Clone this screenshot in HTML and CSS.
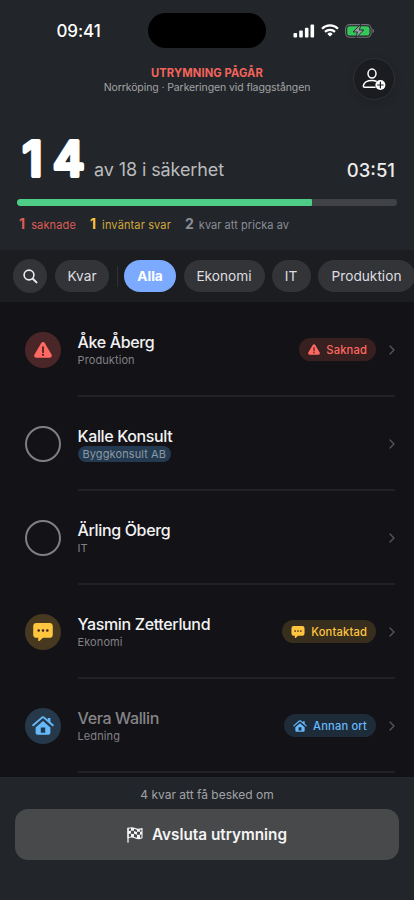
FILE: index.html
```html
<!DOCTYPE html>
<html lang="sv">
<head>
<meta charset="utf-8">
<title>Utrymning</title>
<link rel="stylesheet" href="styles.css">
</head>
<body>
<svg class="defs" width="0" height="0" aria-hidden="true">
  <symbol id="warn" viewBox="0 0 18 16"><path fill="currentColor" d="M7.1 1.2a2.2 2.2 0 0 1 3.8 0l6.6 11.3a2.2 2.2 0 0 1-1.9 3.3H2.4a2.2 2.2 0 0 1-1.9-3.3z"/><path class="cut" d="M9 5.2v5" stroke-width="1.7" stroke-linecap="round"/><circle class="dot" cx="9" cy="12.8" r="1.1"/></symbol>
  <symbol id="chat" viewBox="0 0 20 18"><path fill="currentColor" d="M3.6 0h12.8A3.4 3.4 0 0 1 19.8 3.4v8a3.4 3.4 0 0 1-3.4 3.4H10l-3.6 3.1c-.6.5-1.2.2-1.2-.5v-2.6H3.6A3.4 3.4 0 0 1 .2 11.4v-8A3.4 3.4 0 0 1 3.6 0z"/><circle class="dot" cx="5.7" cy="7.5" r="1.3"/><circle class="dot" cx="10" cy="7.5" r="1.3"/><circle class="dot" cx="14.3" cy="7.5" r="1.3"/></symbol>
  <symbol id="home" viewBox="0 0 22 19"><path d="M1.2 9.3 10 1.6q1-.8 2 0l8.8 7.7" fill="none" stroke="currentColor" stroke-width="1.9" stroke-linecap="round" stroke-linejoin="round"/><path fill="currentColor" d="M15.8 1.9h2.6v5.3l-2.6-2.3z"/><path fill="currentColor" fill-rule="evenodd" d="M3.6 11.4 11 5l7.4 6.4v5.4a2 2 0 0 1-2 2H5.6a2 2 0 0 1-2-2zM8.8 11.6v5.2h4.4v-5.2z"/></symbol>
  <symbol id="chev" viewBox="0 0 6 10"><path d="M1 1l4 4-4 4" fill="none" stroke="currentColor" stroke-width="1.2" stroke-linecap="round" stroke-linejoin="round"/></symbol>
</svg>
<div class="screen">
  <header class="top">
    <div class="status">
      <span class="clock">09:41</span>
      <div class="island"></div>
      <div class="indicators">
        <svg width="22" height="14" viewBox="0 0 22 14" fill="#fff"><rect x="0.5" y="9" width="3.6" height="4.5" rx="1"/><rect x="6.2" y="6.5" width="3.6" height="7" rx="1"/><rect x="11.9" y="3.7" width="3.6" height="9.8" rx="1"/><rect x="17.5" y="0.5" width="3.6" height="13" rx="1"/></svg>
        <svg width="18" height="13" viewBox="0 0 18 13" fill="none" stroke="#fff" stroke-width="2.2"><path d="M1 4.7a11.5 11.5 0 0 1 16 0"/><path d="M4 7.9a7.1 7.1 0 0 1 10 0"/><path d="M9 12.6 6.3 9.9a3.9 3.9 0 0 1 5.4 0z" fill="#fff" stroke="none"/></svg>
        <svg width="30" height="14" viewBox="0 0 30 14"><rect x=".6" y=".6" width="25.5" height="12.6" rx="4" fill="none" stroke="#707276" stroke-width="1.1"/><rect x="2.2" y="2.2" width="22.3" height="9.4" rx="2.6" fill="#34c759"/><path d="M27.5 4.8q1.6.6 1.6 2.2t-1.6 2.2z" fill="#707276"/><path d="M15.9.2 8 7.900h4.400l-1.500 6 7.900-7.900h-4.400z" fill="#9a9aa2" stroke="#222529" stroke-width=".9"/></svg>
      </div>
    </div>
    <div class="title">
      <h1>UTRYMNING PÅGÅR</h1>
      <p>Norrköping · Parkeringen vid flaggstången</p>
      <button class="add" aria-label="Lägg till person"><svg width="24" height="22" viewBox="0 0 24 22"><ellipse cx="10" cy="5.6" rx="4" ry="4.5" fill="none" stroke="#fff" stroke-width="1.5"/><path d="M13 19.2H2.7c-1.2 0-1.5-.7-1.3-1.7.7-3 4-5 8.6-5 1.6 0 3 .2 4.2.7" fill="none" stroke="#fff" stroke-width="1.5" stroke-linecap="round"/><circle cx="18.4" cy="17" r="5" fill="#fff"/><path d="M18.4 14.2v5.6M15.6 17h5.6" stroke="#1b1c1f" stroke-width="1.2" stroke-linecap="round"/></svg></button>
    </div>
    <div class="score">
      <svg class="big" width="68" height="66" viewBox="0 0 68 66"><text class="digits" y="49.5"><tspan x="2.5">1</tspan><tspan x="33">4</tspan></text></svg>
      <span class="of">av 18 i säkerhet</span>
      <span class="timer">03:51</span>
    </div>
    <div class="bar"><div class="fill"></div></div>
    <div class="legend">
      <span class="red"><b>1</b>saknade</span>
      <span class="yellow"><b>1</b>inväntar svar</span>
      <span class="grey"><b>2</b>kvar att pricka av</span>
    </div>
  </header>
  <nav class="filters">
    <button class="search" aria-label="Sök"><svg width="15" height="15" viewBox="0 0 15 15" fill="none" stroke="#ececee" stroke-linecap="round"><circle cx="6" cy="6" r="4.9" stroke-width="1.6"/><path d="M9.8 9.8 13.5 13.4" stroke-width="2"/></svg></button>
    <button class="pill kvar">Kvar</button>
    <i class="rule"></i>
    <button class="pill alla">Alla</button>
    <button class="pill eko">Ekonomi</button>
    <button class="pill it">IT</button>
    <button class="pill prod">Produktion</button>
  </nav>
  <main class="list">
    <div class="row red">
      <div class="avatar"><svg width="18" height="16"><use href="#warn"/></svg></div>
      <div class="body"><div class="who"><div class="name">Åke Åberg</div><div class="dept">Produktion</div></div>
      <span class="tag"><svg width="12" height="11"><use href="#warn"/></svg>Saknad</span><svg class="chev" width="6" height="10"><use href="#chev"/></svg></div>
    </div>
    <div class="row">
      <div class="avatar ring"></div>
      <div class="body"><div class="who"><div class="name">Kalle Konsult</div><div class="dept firm">Byggkonsult AB</div></div>
      <svg class="chev" width="6" height="10"><use href="#chev"/></svg></div>
    </div>
    <div class="row">
      <div class="avatar ring"></div>
      <div class="body"><div class="who"><div class="name">Ärling Öberg</div><div class="dept">IT</div></div>
      <svg class="chev" width="6" height="10"><use href="#chev"/></svg></div>
    </div>
    <div class="row yellow">
      <div class="avatar"><svg width="20" height="18"><use href="#chat"/></svg></div>
      <div class="body"><div class="who"><div class="name">Yasmin Zetterlund</div><div class="dept">Ekonomi</div></div>
      <span class="tag"><svg width="14" height="12"><use href="#chat"/></svg>Kontaktad</span><svg class="chev" width="6" height="10"><use href="#chev"/></svg></div>
    </div>
    <div class="row blue">
      <div class="avatar"><svg width="22" height="19"><use href="#home"/></svg></div>
      <div class="body"><div class="who"><div class="name">Vera Wallin</div><div class="dept">Ledning</div></div>
      <span class="tag"><svg width="14" height="12"><use href="#home"/></svg>Annan ort</span><svg class="chev" width="6" height="10"><use href="#chev"/></svg></div>
    </div>
  </main>
  <footer class="foot">
    <p>4 kvar att få besked om</p>
    <button class="end"><svg width="16" height="16" viewBox="0 0 16 16"><path d="M1 1.2v14" stroke="#f4f4f4" stroke-width="1.3" stroke-linecap="round"/><path d="M1 1.6q3.5-1.6 7 0t7 0v9.2q-3.5 1.6-7 0t-7 0z" fill="none" stroke="#f4f4f4" stroke-width="1.1" stroke-linejoin="round"/><path fill="#f4f4f4" d="M4 1h3v2.8H4zM10 2h3v2.8h-3zM1 4.2 4 3.6v3L1 7zM7 4l3 .9v2.9L7 6.8zM13 4.8l2-.4v3l-2 .4zM4 6.7l3 .2v3H4zM10 7.8h3v3.400h-3z"/></svg>Avsluta utrymning</button>
  </footer>
</div>
</body>
</html>
```
FILE: styles.css
```css
* { box-sizing: border-box; }
body { margin: 0; background: #131217; font-family: Inter, "Liberation Sans", sans-serif; color: #fff; }
h1, p { margin: 0; font-weight: 400; }
button { border: 0; padding: 0; font: inherit; color: inherit; display: flex; align-items: center; justify-content: center; flex: none; }
svg { display: block; flex: none; }
.defs { position: absolute; }
.screen { width: 414px; height: 900px; overflow: hidden; display: flex; flex-direction: column; }
.top { height: 250px; background: #222529; flex: none; }

.status { height: 62px; padding-top: 13px; display: flex; align-items: flex-start; }
.clock { width: 148px; padding-left: 56.5px; font-size: 17px; font-weight: 550; line-height: 36px; letter-spacing: -.1px; }
.island { width: 118px; height: 35px; border-radius: 18px; background: #000; }
.indicators { display: flex; align-items: center; gap: 6px; margin: 10.5px 0 0 27px; height: 14px; }

.title { position: relative; height: 68px; padding-top: 4px; text-align: center; }
.title h1 { font-size: 11.2px; line-height: 14px; font-weight: 700; color: #f2645c; letter-spacing: .1px; }
.title p { font-size: 10.5px; line-height: 15px; color: #a2a3a6; letter-spacing: -.1px; }
.add { position: absolute; right: 19px; top: -4px; width: 42px; height: 42px; border-radius: 50%; background: #1b1c1f; border: 1px solid #303135; box-shadow: 0 3px 10px rgba(0,0,0,.12); }

.score { height: 69px; padding: 0 19px 0 20px; display: flex; align-items: flex-end; }
.big { margin-bottom: 7px; }
.digits { font: 500 48px Inter, sans-serif; fill: #fff; stroke: #fff; stroke-width: 4.2px; stroke-linejoin: round; }
.of { margin: 0 auto 17px 6px; font-size: 18px; line-height: 24px; color: #babbbd; letter-spacing: -.1px; }
.timer { margin-bottom: 17px; font-size: 18.5px; line-height: 24px; font-weight: 550; color: #ececec; }
.bar { margin: 0 17px; height: 7px; border-radius: 3px; background: #414246; overflow: hidden; }
.fill { width: 295px; height: 7px; border-radius: 3px 1px 1px 3px; background: #4dcd86; }
.legend { display: flex; gap: 14px; padding: 9.5px 19px 0; font-size: 11px; line-height: 16px; letter-spacing: .13px; }
.legend b { font-size: 14px; font-weight: 700; margin-right: 6px; }
.legend .red { color: #dd5c57; }
.legend .yellow { color: #d2a83a; }
.legend .yellow b { color: #fdc43d; }
.legend .grey { color: #8b8d95; letter-spacing: .05px; }
.legend .grey b { margin-right: 5px; }

.filters { height: 52px; background: #1c1d21; display: flex; align-items: center; padding-left: 13px; flex: none; overflow: hidden; }
.search { width: 34px; height: 34px; border-radius: 50%; background: #333437; margin-right: 8px; }
.pill { height: 32px; border-radius: 16px; background: #333437; color: #dedee0; font-size: 13.7px; margin-right: 7.5px; }
.kvar { width: 54px; }
.rule { flex: none; width: 1px; height: 21px; background: #303135; margin-right: 6.5px; }
.alla { width: 52px; background: #7caaff; color: #fff; font-weight: 700; }
.eko { width: 81px; margin-right: 7px; }
.it { width: 39px; }
.prod { width: 97px; }

.list { height: 475px; flex: none; overflow: hidden; padding-top: 1px; }
.row { height: 94px; padding: 0 19px 0 24.5px; display: flex; align-items: center; }
.avatar { width: 36px; height: 36px; margin-top: -1px; border-radius: 50%; margin-right: 17px; display: flex; align-items: center; justify-content: center; flex: none; }
.ring { border: 2px solid #7f7f82; }
.body { flex: 1; height: 94px; border-bottom: 2px solid #222226; display: flex; align-items: center; }
.who { margin-right: auto; padding-top: 2px; }
.name { font-size: 16px; line-height: 20px; font-weight: 500; color: #f2f2f3; letter-spacing: -.35px; }
.dept { width: max-content; font-size: 11px; line-height: 16px; color: #818185; letter-spacing: .1px; }
.firm { padding: 0 5px; border-radius: 8px; background: #233a50; color: #8b98a5; }
.tag { height: 23px; margin-top: 1px; border-radius: 12px; padding: 0 9px; display: flex; align-items: center; gap: 6px; font-size: 11.2px; font-weight: 550; letter-spacing: .15px; }
.chev { margin: 1px 0 0 13px; color: #59595d; }
.cut { stroke: #3f2024; }
.dot { fill: #3f2024; }
.list .red { color: #ff6961; }
.red .avatar { background: #4a2628; }
.red .tag { background: #37201f; }
.list .yellow { color: #ffc53f; }
.yellow .avatar { background: #463920; }
.yellow .tag { background: #382e1d; }
.list .blue { color: #66b9fb; }
.blue .avatar { background: #25394b; }
.blue .tag { background: #1e2b39; }
.blue .name { color: #858588; }

.foot { height: 123px; background: #222529; padding: 9px 15px 0; border-top: 1px solid #25282b; }
.foot p { height: 22px; text-align: center; font-size: 12px; line-height: 16px; color: #a2a3a6; }
.end { width: 384px; height: 51px; border-radius: 13px; background: #48494b; color: #f4f4f4; font-size: 15.3px; font-weight: 600; gap: 9px; }
```
